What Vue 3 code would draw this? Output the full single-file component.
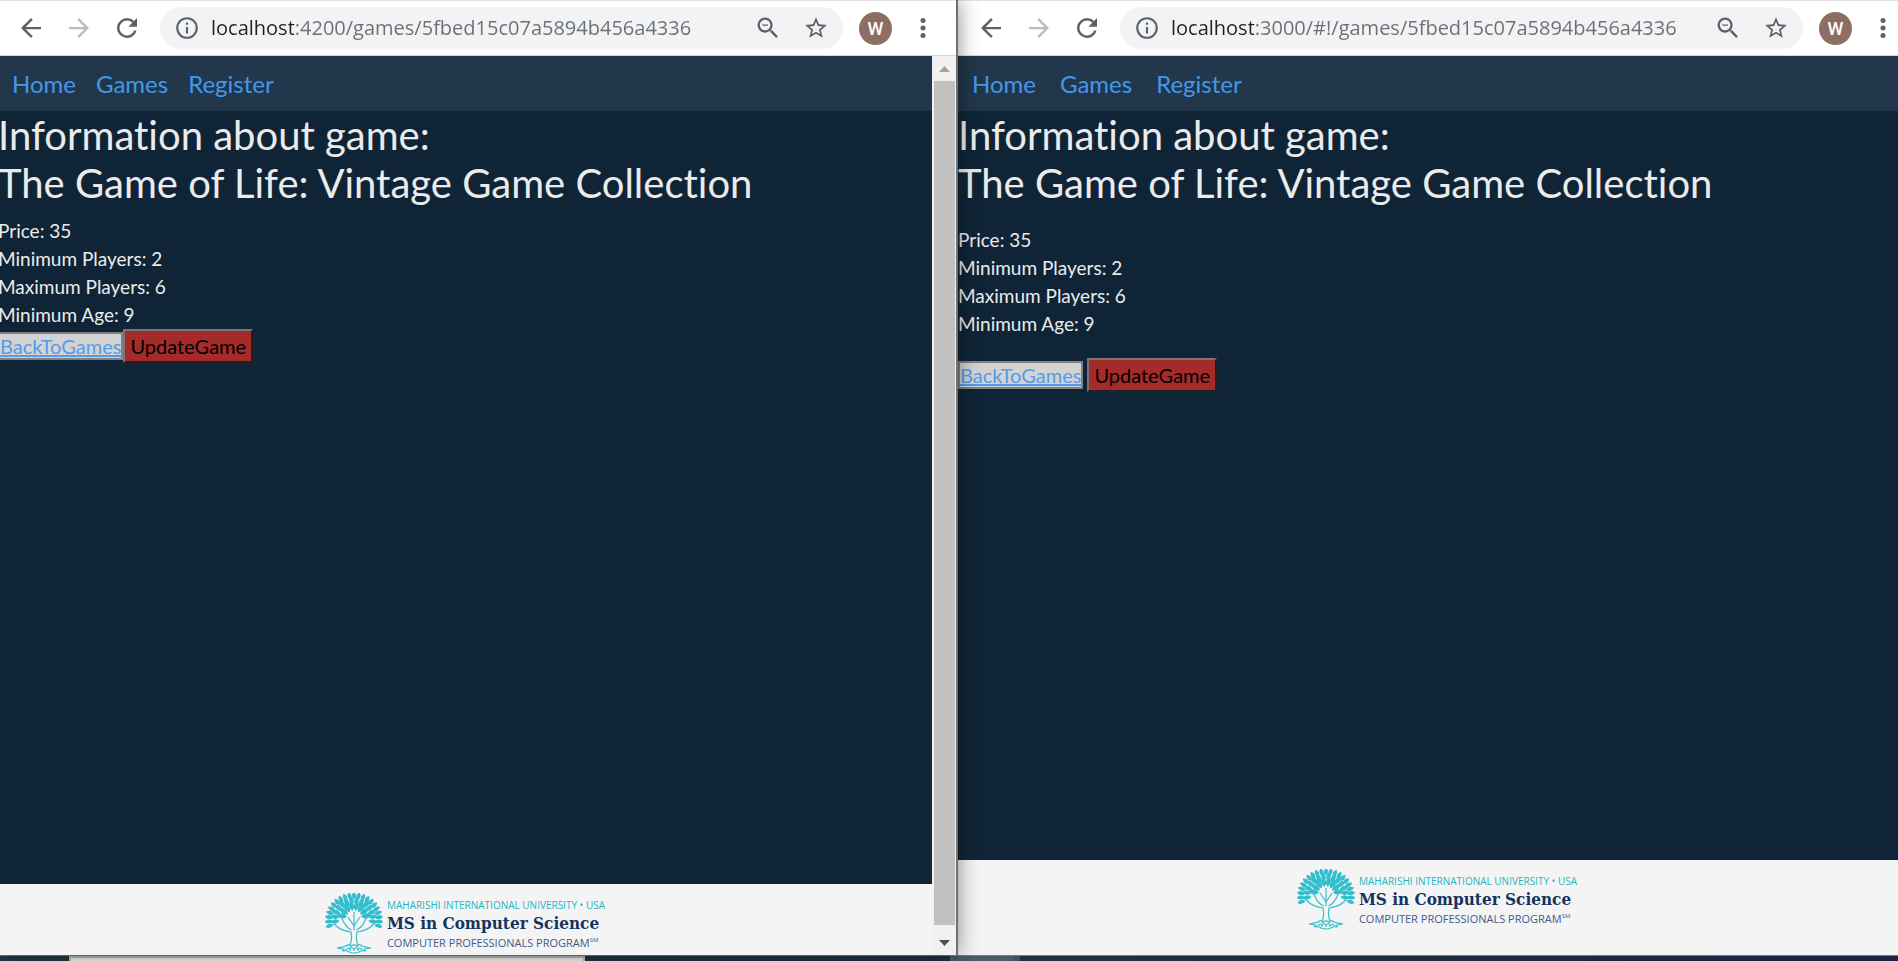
<script setup>
const windows = [
  { id: 'angular', url: 'localhost:4200/games/5fbed15c07a5894b456a4336', scroll: true },
  { id: 'angularjs', url: 'localhost:3000/#!/games/5fbed15c07a5894b456a4336', scroll: false },
]

const links = ['Home', 'Games', 'Register']

const game = {
  title: 'The Game of Life: Vintage Game Collection',
  facts: ['Price: 35', 'Minimum Players: 2', 'Maximum Players: 6', 'Minimum Age: 9'],
}

// Leaves fan out from the crown of the trunk in three rings.
const ring = (count, from, to, rx, ry, cx, cy, scale) =>
  Array.from({ length: count }, (_, i) => {
    const deg = from + ((to - from) * i) / (count - 1)
    const rad = (deg * Math.PI) / 180
    return `translate(${(cx + rx * Math.sin(rad)).toFixed(1)} ${(cy - ry * Math.cos(rad)).toFixed(1)}) rotate(${deg.toFixed(0)}) scale(${scale})`
  })

const leaves = [
  ...ring(21, -104, 104, 25, 24, 29, 27, 0.9),
  ...ring(14, -98, 98, 19, 18, 29, 26, 1),
  ...ring(8, -80, 80, 12, 12, 29, 25, 1.1),
]
</script>

<template>
  <div class="desktop">
    <div class="windows">
      <section v-for="w in windows" :key="w.id" class="window" :class="{ front: w.scroll }">
        <header class="toolbar">
          <button class="icon-button" aria-label="Back">
            <svg class="i30" viewBox="0 0 24 24"><path d="M20 11.1H7.8l5.6-5.7L12 4l-8 8 8 8 1.4-1.4-5.6-5.7H20z" /></svg>
          </button>
          <button class="icon-button faded" aria-label="Forward">
            <svg class="i30" viewBox="0 0 24 24"><path d="M4 11.1h12.2l-5.6-5.7L12 4l8 8-8 8-1.4-1.4 5.6-5.7H4z" /></svg>
          </button>
          <button class="icon-button" aria-label="Reload">
            <svg class="i30" viewBox="0 0 24 24"><path d="M17.65 6.35A7.96 7.96 0 0 0 12 4a8 8 0 1 0 7.73 10h-2.08A6 6 0 1 1 12 6c1.66 0 3.14.69 4.22 1.78L13 11h7V4z" /></svg>
          </button>
          <div class="omnibox">
            <svg class="i26" viewBox="0 0 24 24"><path d="M11 7h2v2h-2zm0 4h2v6h-2zm1-9a10 10 0 1 0 0 20 10 10 0 0 0 0-20zm0 18a8 8 0 1 1 0-16 8 8 0 0 1 0 16z" /></svg>
            <input class="url" type="text" :value="w.url" aria-label="Address" />
            <button class="icon-button zoom" aria-label="Zoom">
              <svg class="i28" viewBox="0 0 24 24"><path d="M15.5 14h-.79l-.28-.27A6.47 6.47 0 0 0 16 9.5 6.5 6.5 0 1 0 9.5 16c1.61 0 3.09-.59 4.23-1.57l.27.28v.79l5 4.99L20.49 19zm-6 0a4.5 4.5 0 1 1 0-9 4.5 4.5 0 0 1 0 9zM7 9h5v1H7z" /></svg>
            </button>
            <button class="icon-button" aria-label="Bookmark this page">
              <svg class="i26" viewBox="0 0 24 24"><path d="M22 9.24l-7.19-.62L12 2 9.19 8.63 2 9.24l5.46 4.73L5.82 21 12 17.27 18.18 21l-1.63-7.03zM12 15.4l-3.76 2.27 1-4.28-3.32-2.88 4.38-.38L12 6.1l1.71 4.04 4.38.38-3.32 2.88 1 4.28z" /></svg>
            </button>
          </div>
          <button class="avatar" aria-label="Profile">W</button>
          <button class="icon-button" aria-label="Menu">
            <svg class="i30" viewBox="0 0 30 30"><circle cx="15" cy="7.5" r="2.5" /><circle cx="15" cy="15" r="2.5" /><circle cx="15" cy="22.5" r="2.5" /></svg>
          </button>
        </header>

        <div class="viewport">
          <div class="page">
            <nav class="nav">
              <a v-for="l in links" :key="l" href="#">{{ l }}</a>
            </nav>
            <main class="content">
              <h1>Information about game:<br />{{ game.title }}</h1>
              <div class="facts">
                <div v-for="f in game.facts" :key="f">{{ f }}</div>
              </div>
              <div class="actions">
                <a class="back" href="#">BackToGames</a>
                <button class="update">UpdateGame</button>
              </div>
            </main>
            <footer class="footer">
              <svg class="tree" viewBox="0 0 58 61">
                <g class="leaves">
                  <path v-for="t in leaves" :key="t" :transform="t" d="M0 4.5Q-4.6 0 0-5Q4.6 0 0 4.5z" />
                </g>
                <g class="branches">
                  <path d="M25 53q2.5-7 1-14Q16 38 9 31M33 53q-2.5-7-1-14Q42 38 49 31M26.5 37Q20 34 17 25M31.5 37Q38 34 41 25M29 37V19M29 33l-6-9M29 33l6-9" />
                  <path d="M25 51q-5 3-13 4 4 1 7 1-1 2-2 2 5-1 7 1 5 2 10 0 2-2 7-1-1 0-2-2 3 0 7-1-8-1-13-4" />
                  <path d="M21 57q3-4 4 0 2-5 4 0 2-5 4 0 2-4 4 0M25 54q4-4 8 0" />
                </g>
              </svg>
              <div class="brand">
                <span class="university">MAHARISHI INTERNATIONAL UNIVERSITY • USA</span>
                <strong class="degree">MS in Computer Science</strong>
                <span class="program">COMPUTER PROFESSIONALS PROGRAM<sup>SM</sup></span>
              </div>
            </footer>
          </div>
          <div v-if="w.scroll" class="scrollbar">
            <svg viewBox="0 0 21 25"><path class="dim" d="M5 16h11l-5.5-6z" /></svg>
            <div class="thumb"></div>
            <svg class="down" viewBox="0 0 21 30"><path d="M5 15h11l-5.5 6z" /></svg>
          </div>
        </div>
      </section>
    </div>
    <div class="taskbar">
      <div class="preview"></div>
      <div class="task"></div>
    </div>
  </div>
</template>

<style>
body {
  background: #0f2537;
}
</style>

<style scoped>
.desktop {
  display: flex;
  flex-direction: column;
  min-height: 100vh;
  overflow: hidden;
  font-family: Lato, "Liberation Sans", sans-serif;
  font-variant-ligatures: none;
}
.desktop * {
  box-sizing: border-box;
}
/* Both windows reach slightly past the screen edges. */
.windows {
  flex: 1;
  display: grid;
  grid-template-columns: 1fr 1fr;
  margin: 0 -20px 0 -2px;
  border-bottom: 1px solid #777b7b;
}
.window {
  display: flex;
  flex-direction: column;
  min-width: 0;
  border-right: 2px solid #707070;
}
.front {
  position: relative;
  z-index: 1;
  box-shadow: 0 0 20px rgba(0, 0, 0, 0.45);
}
.toolbar {
  display: flex;
  align-items: center;
  gap: 18px;
  height: 56px;
  padding: 0 18px;
  border-top: 1px solid #dee1e6;
  border-bottom: 1px solid #d8d8d8;
  background: #fff;
}
button {
  font-family: inherit;
}
svg {
  display: block;
  fill: #5f6368;
}
.icon-button {
  flex: none;
  padding: 0;
  border: 0;
  background: none;
}
.faded {
  opacity: 0.42;
}
.i30 {
  width: 30px;
  height: 30px;
}
.i28 {
  width: 28px;
  height: 28px;
}
.i26 {
  flex: none;
  width: 26px;
  height: 26px;
}
.omnibox {
  flex: 1;
  display: flex;
  align-items: center;
  min-width: 0;
  height: 42px;
  padding: 0 14px;
  border-radius: 21px;
  background: #f1f3f4;
}
.url {
  flex: 1;
  min-width: 0;
  margin-left: 11px;
  padding: 0;
  border: 0;
  outline: 0;
  font: 20px/30px "Open Sans", "Noto Sans", sans-serif;
  color: transparent;
  background: linear-gradient(90deg, #202124 83px, #6b6f73 83px) text;
}
.zoom {
  margin-right: 21px;
}
.avatar {
  flex: none;
  width: 33px;
  height: 33px;
  margin: 0 -2px;
  padding: 0;
  border: 0;
  border-radius: 50%;
  background: #8d6e63;
  color: #fff;
  font: 500 18px Roboto, sans-serif;
}
.viewport {
  flex: 1;
  display: flex;
}
.page {
  flex: 1;
  display: flex;
  flex-direction: column;
  min-width: 0;
  background: #0f2537;
  color: #ebebeb;
}
.nav {
  display: flex;
  gap: 24px;
  padding: 0 14px;
  background: #22374b;
  font-size: 24px;
  line-height: 55px;
}
.front .nav {
  gap: 20px;
}
.nav a {
  color: #4298ea;
  text-decoration: none;
}
.content {
  flex: 1;
  font-size: 19px;
  line-height: 28px;
}
h1 {
  margin: 0;
  font-size: 40px;
  font-weight: 400;
  line-height: 48px;
}
.facts {
  margin: 19px 0 20px;
}
.front .facts {
  margin: 10px 0 0;
}
.actions {
  display: flex;
  align-items: center;
  gap: 4px;
  font-size: 20px;
}
.front .actions {
  gap: 0;
}
.back {
  border: 2px solid #808080;
  background: #d3d3d3;
  color: #549bea;
  line-height: 24px;
}
.update {
  padding: 0 5px;
  border: 2px outset #767676;
  background: #a52a2a;
  color: #000;
  font-size: 20px;
  line-height: 30px;
}
.footer {
  display: flex;
  justify-content: center;
  gap: 4px;
  height: 95px;
  padding-top: 9px;
  background: #f4f4f4;
}
.front .footer {
  height: 71px;
}
.tree {
  width: 58px;
  height: 61px;
}
.leaves {
  fill: #32bfcd;
}
.branches {
  fill: none;
  stroke: #32bfcd;
  stroke-width: 1.2;
}
.brand {
  display: flex;
  flex-direction: column;
  padding-top: 4px;
  white-space: nowrap;
  font-family: "Open Sans", sans-serif;
}
.university {
  color: #1fb4c4;
  font-size: 10px;
  line-height: 16px;
}
.degree {
  color: #15335f;
  font: 700 17px/20px "DejaVu Serif Condensed", "DejaVu Serif", serif;
}
.program {
  color: #3f5a8c;
  font-size: 11px;
  line-height: 20px;
}
sup {
  font-size: 6px;
  line-height: 0;
}
.scrollbar {
  display: flex;
  flex-direction: column;
  width: 24px;
  padding: 0 1px 0 2px;
  background: #f1f1f1;
}
.scrollbar svg {
  height: 25px;
  fill: #505050;
}
.scrollbar .dim {
  fill: #a3a3a3;
}
.scrollbar .down {
  height: 30px;
}
.thumb {
  flex: 1;
  background: #c1c1c1;
}
.taskbar {
  display: flex;
  height: 5px;
  background: linear-gradient(90deg, #203b45, #20303f 60%, #1b2444);
}
.preview {
  width: 516px;
  margin-left: 69px;
  border: 2px solid #b9bdbb;
  border-bottom: 0;
  background: #f0f0f0;
}
.task {
  width: 70px;
  margin-left: 365px;
  border-right: 7px solid #43515d;
  background: #4c5d67;
}
</style>
